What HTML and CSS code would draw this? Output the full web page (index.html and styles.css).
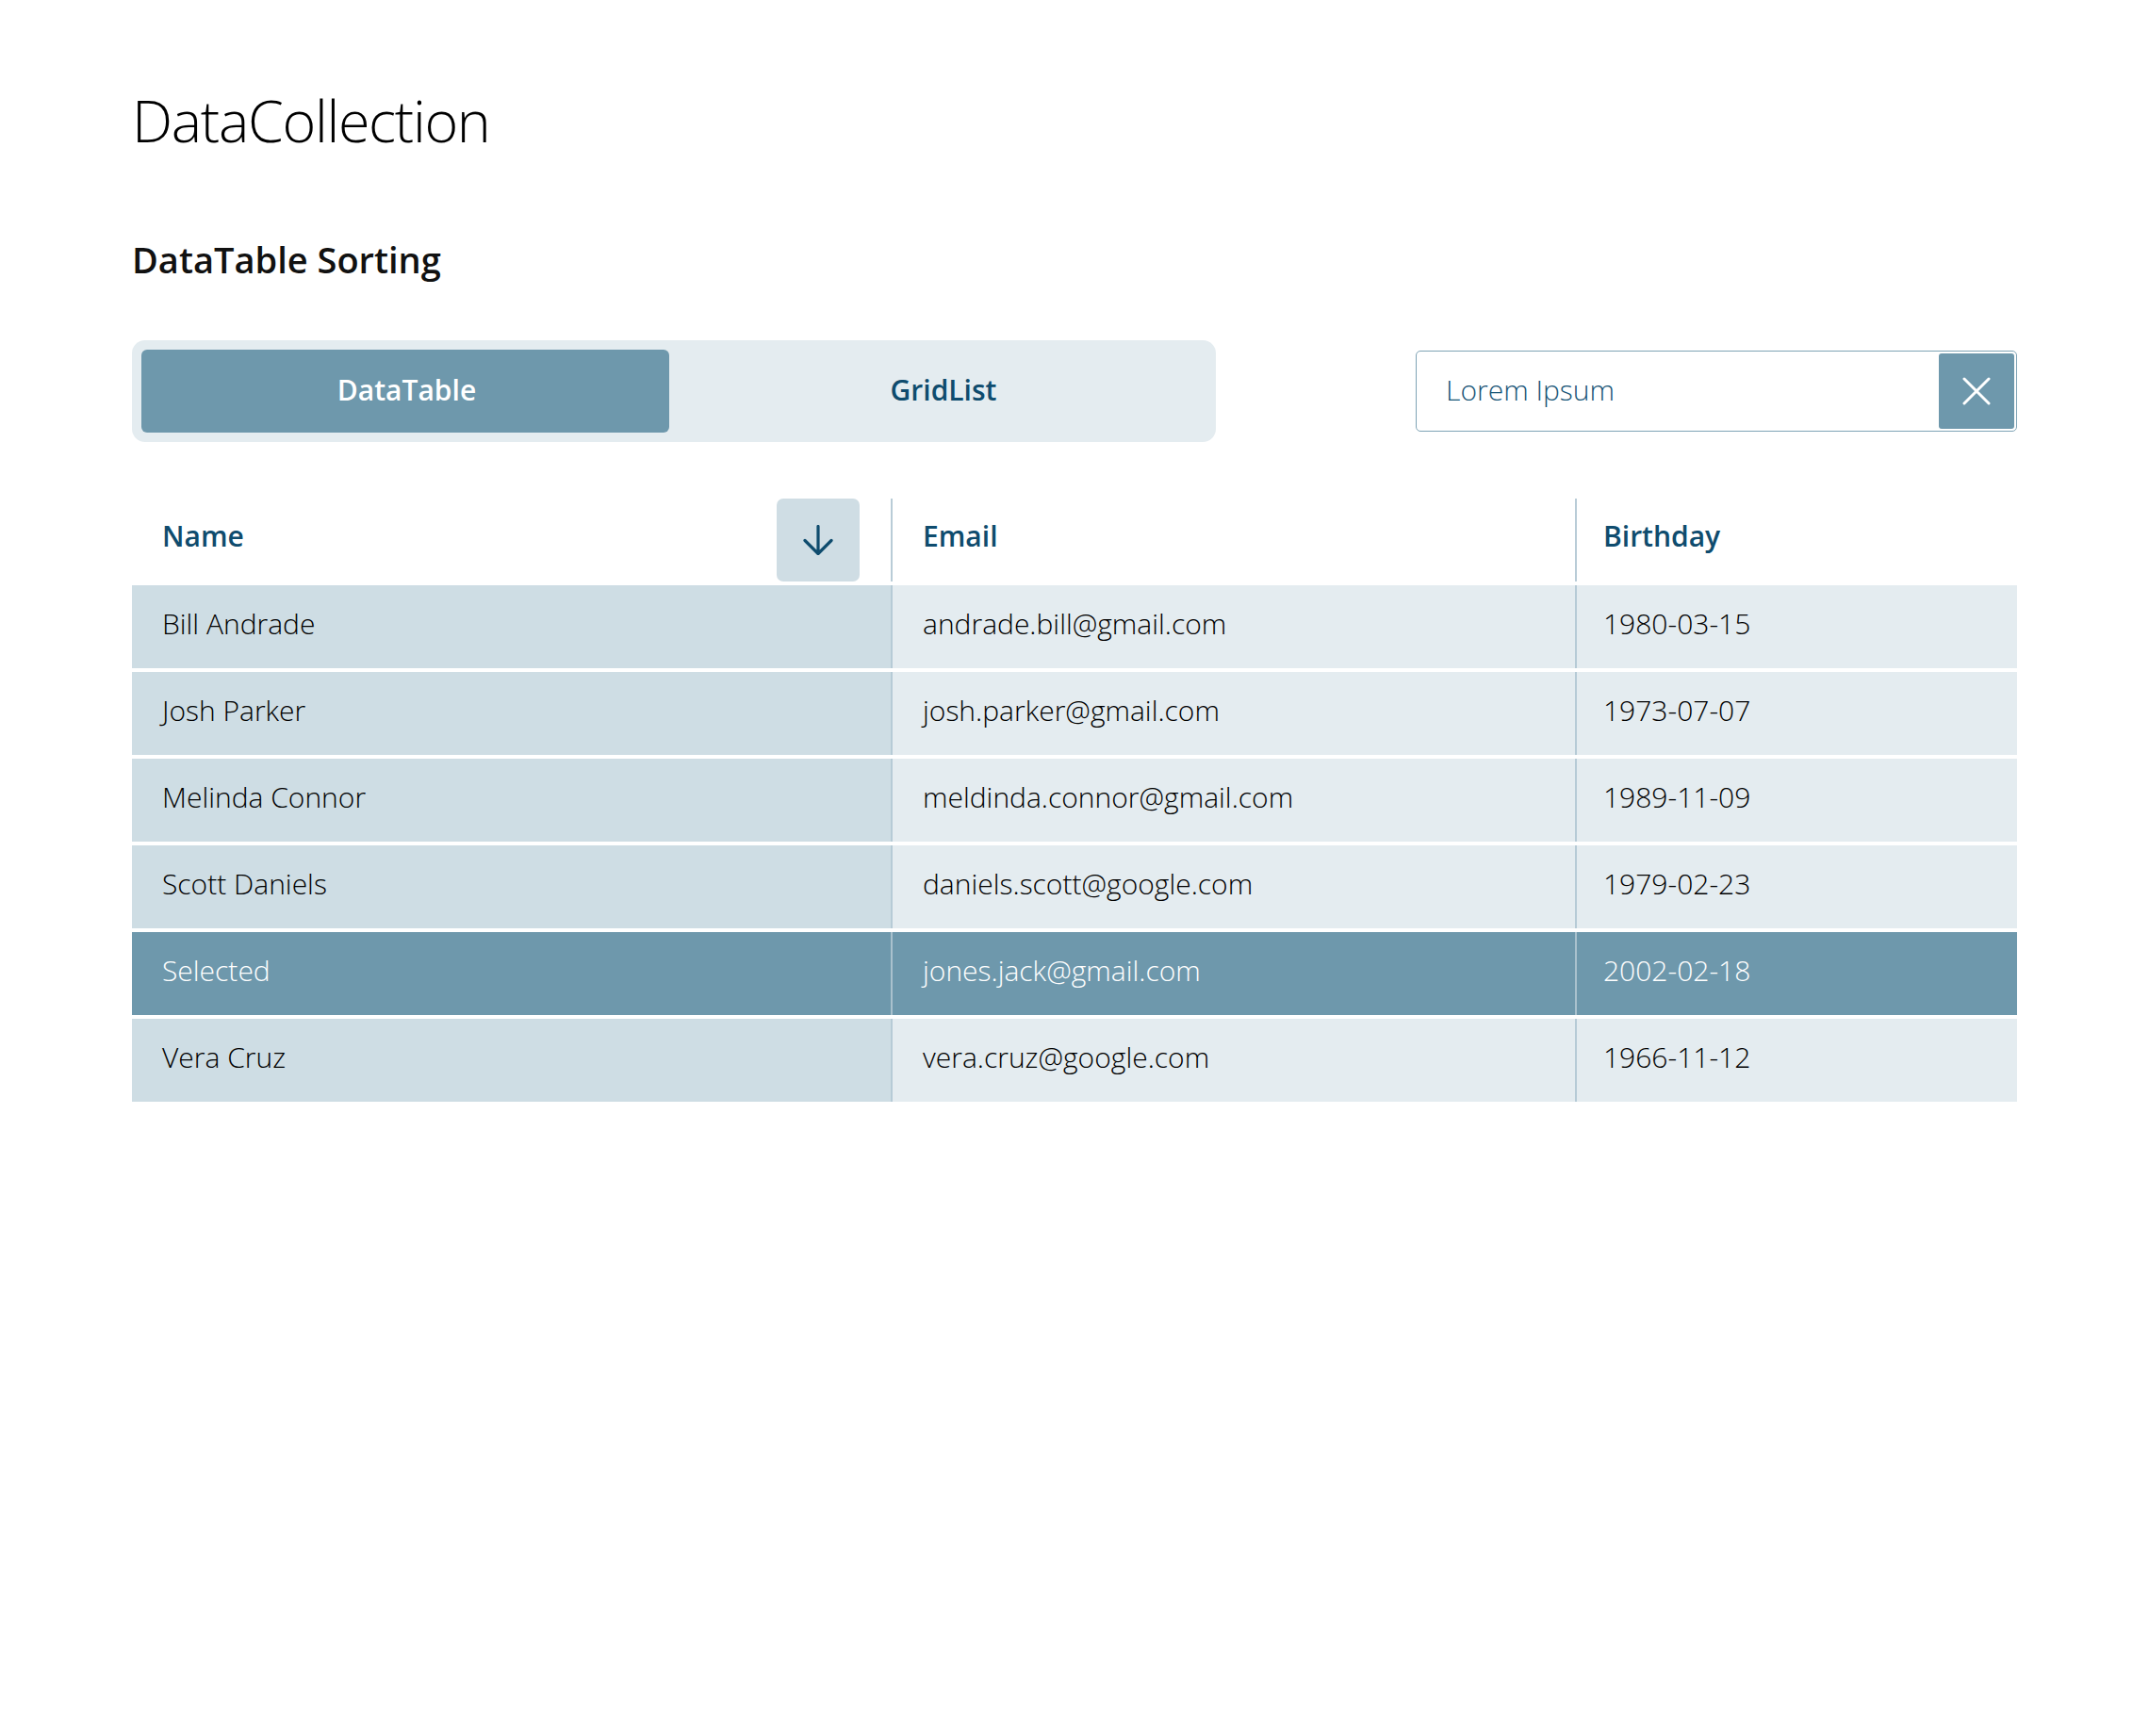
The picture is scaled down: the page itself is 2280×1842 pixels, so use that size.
FILE: index.html
```html
<!DOCTYPE html>
<html lang="en">
<head>
<meta charset="utf-8">
<title>DataCollection</title>
<link rel="stylesheet" href="styles.css">
</head>
<body>
<main class="page">
  <h1 class="title">DataCollection</h1>
  <h2 class="subtitle">DataTable Sorting</h2>

  <div class="toolbar">
    <div class="toggle">
      <button class="tab tab-active">DataTable</button>
      <button class="tab tab-idle">GridList</button>
    </div>
    <div class="search">
      <span class="search-text">Lorem Ipsum</span>
      <button class="search-clear" aria-label="Clear">
        <svg width="30" height="30" viewBox="0 0 30 30"><path d="M2 2L28 28M28 2L2 28" fill="none" stroke="#fff" stroke-width="3" stroke-linecap="round"/></svg>
      </button>
    </div>
  </div>

  <div class="table">
    <div class="th th-name">
      <span class="th-label">Name</span>
      <button class="sort-btn" aria-label="Sort">
        <svg width="32" height="32" viewBox="0 0 32 32"><path d="M16 1.5V30.5M2 16.5L16 30.5L30 16.5" fill="none" stroke="#0f4c6e" stroke-width="3.2" stroke-linecap="round" stroke-linejoin="round"/></svg>
      </button>
    </div>
    <div class="th th-sep th-email"><span class="th-label">Email</span></div>
    <div class="th th-sep th-birth"><span class="th-label">Birthday</span></div>

    <div class="td td-name">Bill Andrade</div>
    <div class="td td-sep">andrade.bill@gmail.com</div>
    <div class="td td-sep td-birth">1980-03-15</div>

    <div class="td td-name">Josh Parker</div>
    <div class="td td-sep">josh.parker@gmail.com</div>
    <div class="td td-sep td-birth">1973-07-07</div>

    <div class="td td-name">Melinda Connor</div>
    <div class="td td-sep">meldinda.connor@gmail.com</div>
    <div class="td td-sep td-birth">1989-11-09</div>

    <div class="td td-name">Scott Daniels</div>
    <div class="td td-sep">daniels.scott@google.com</div>
    <div class="td td-sep td-birth">1979-02-23</div>

    <div class="td td-name td-sel">Selected</div>
    <div class="td td-sep td-sel">jones.jack@gmail.com</div>
    <div class="td td-sep td-birth td-sel">2002-02-18</div>

    <div class="td td-name">Vera Cruz</div>
    <div class="td td-sep">vera.cruz@google.com</div>
    <div class="td td-sep td-birth">1966-11-12</div>
  </div>
</main>
</body>
</html>
```

FILE: styles.css
```css
* { box-sizing: border-box; }

html, body {
  margin: 0;
  padding: 0;
  background: #ffffff;
}

body {
  font-family: "Open Sans", "Noto Sans", sans-serif;
  color: #111;
}

.page {
  padding: 88px 140px 0 140px;
}

.title {
  margin: 0;
  font-size: 61px;
  line-height: 80px;
  font-weight: 300;
  letter-spacing: -1.3px;
  color: #000;
}

.subtitle {
  margin: 79px 0 0 0;
  font-size: 38px;
  line-height: 56px;
  font-weight: 600;
  color: #111;
}

.toolbar {
  margin-top: 58px;
  display: flex;
  justify-content: space-between;
  align-items: flex-start;
}

.toggle {
  width: 1150px;
  height: 108px;
  padding: 10px;
  background: #e4ecf0;
  border-radius: 14px;
  display: flex;
}

.tab {
  border: 0;
  background: transparent;
  border-radius: 6px;
  font-family: inherit;
  font-size: 30px;
  font-weight: 600;
  color: #0f4c6e;
  padding: 0 0 3px 0;
}

.tab-active {
  flex: 0 0 560px;
  background: #6e98ac;
  color: #ffffff;
  padding-left: 3px;
}

.tab-idle {
  flex: 1 1 auto;
  padding-left: 12px;
}

.search {
  margin-top: 11px;
  width: 638px;
  height: 86px;
  border: 1.5px solid #7ea3b5;
  border-radius: 5px;
  display: flex;
  align-items: center;
  justify-content: space-between;
  padding: 0 2px 0 31px;
}

.search-text {
  font-size: 30px;
  font-weight: 300;
  color: #175476;
  margin-bottom: 4px;
}

.search-clear {
  width: 80px;
  height: 80px;
  border: 0;
  border-radius: 3px;
  background: #6e98ac;
  display: flex;
  align-items: center;
  justify-content: center;
  padding: 0;
}

.table {
  margin-top: 60px;
  display: grid;
  grid-template-columns: 805px 726px 1fr;
  grid-auto-rows: 88px;
  row-gap: 4px;
}

.th {
  display: flex;
  align-items: center;
  padding: 0 32px;
  font-size: 30px;
  font-weight: 600;
  color: #0f4c6e;
}

.th-label {
  margin-bottom: 9px;
}

.th-name {
  justify-content: space-between;
  padding-right: 33px;
}

.th-sep {
  border-left: 2px solid #b9ccd7;
}

.th-birth {
  padding-left: 28px;
}

.sort-btn {
  width: 88px;
  height: 88px;
  border: 0;
  border-radius: 7px;
  background: #cfdde4;
  display: flex;
  align-items: center;
  justify-content: center;
  padding: 0;
}

.td {
  display: flex;
  align-items: center;
  padding: 0 32px 7px 32px;
  font-size: 30px;
  font-weight: 350;
  color: #000;
  background: #e4ecf0;
}

.td-name {
  background: #cedde4;
}

.td-sep {
  border-left: 2px solid #b6cbd6;
}

.td-birth {
  padding-left: 28px;
}

.td-sel {
  background: #6e98ac;
  color: #ffffff;
}

.td-sel.td-sep {
  border-left-color: #a9c1cd;
}
```
